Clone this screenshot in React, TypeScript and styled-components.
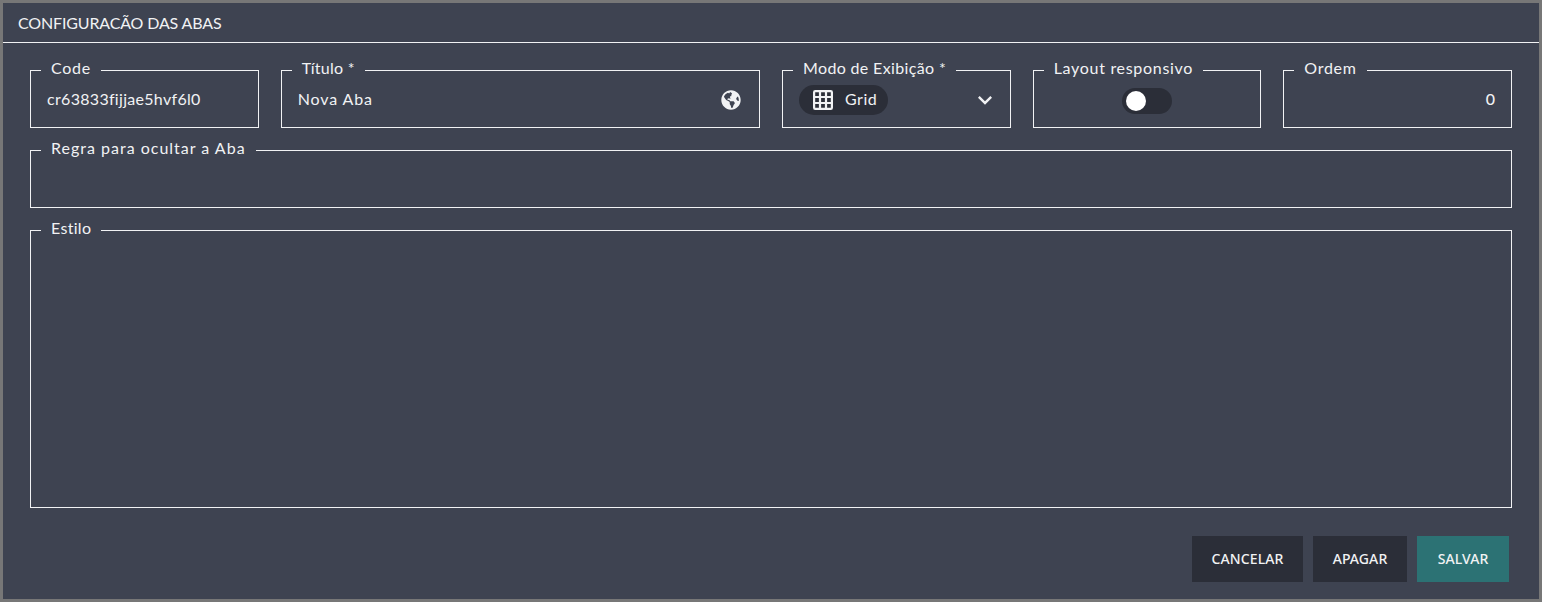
import styled, { createGlobalStyle } from "styled-components";
import { FaGlobeAmericas } from "react-icons/fa";
import { MdKeyboardArrowDown } from "react-icons/md";

const GlobalStyle = createGlobalStyle`
  html, body {
    margin: 0;
    padding: 0;
    background: #777777;
  }
  * {
    box-sizing: border-box;
  }
`

const GridIcon = () => (
  <svg width="20" height="20" viewBox="0 0 20 20" fill="none" stroke="#f1f2f4" strokeWidth="2.2" strokeLinejoin="round">
    <rect x="1.1" y="1.1" width="17.8" height="17.8" rx="1.2" />
    <path d="M7 1v18M13 1v18M1 7h18M1 13h18" />
  </svg>
)

const App = () => {
  return (
    <>
      <GlobalStyle />
      <Dialog>
        <Header>CONFIGURACÃO DAS ABAS</Header>
        <Form>
          <Field>
            <Label>Code</Label>
            <Value $spacing={0.3}>cr63833fijjae5hvf6l0</Value>
          </Field>
          <Field $span={2}>
            <Label $spacing={0.25}>Título *</Label>
            <Value $spacing={0.9}>Nova Aba</Value>
            <GlobeSlot><FaGlobeAmericas size={20} /></GlobeSlot>
          </Field>
          <Field>
            <Label $spacing={0.35}>Modo de Exibição *</Label>
            <Chip>
              <GridIcon />
              <span>Grid</span>
            </Chip>
            <ArrowSlot><MdKeyboardArrowDown size={28} /></ArrowSlot>
          </Field>
          <Field>
            <Label>Layout responsivo</Label>
            <Toggle>
              <Knob />
            </Toggle>
          </Field>
          <Field>
            <Label>Ordem</Label>
            <Number>0</Number>
          </Field>
          <Field $span={6}>
            <Label $spacing={1}>Regra para ocultar a Aba</Label>
          </Field>
          <Field $span={6} $height={290}>
            <Label $spacing={0.3}>Estilo</Label>
          </Field>
        </Form>
        <Footer>
          <Button $width={111}>CANCELAR</Button>
          <Button $width={94}>APAGAR</Button>
          <Button $width={92} $primary>SALVAR</Button>
        </Footer>
      </Dialog>
    </>
  )
};

export default App

const Dialog = styled.div`
  width: 1542px;
  height: 602px;
  border: 3px solid #777777;
  background: #3e4351;
  color: #f1f2f4;
  font-family: "Lato", "Open Sans", sans-serif;
  overflow: hidden;
`

const Header = styled.div`
  height: 40px;
  padding: 0 15px;
  display: flex;
  align-items: center;
  font-size: 16px;
  letter-spacing: -0.15px;
  border-bottom: 1px solid #f1f2f4;
`

const Form = styled.div`
  display: grid;
  grid-template-columns: repeat(6, 1fr);
  column-gap: 22px;
  row-gap: 10px;
  padding: 15px 27px 0 27px;
`

const Field = styled.fieldset<{ $span?: number; $height?: number }>`
  grid-column: span ${p => p.$span ?? 1};
  height: ${p => p.$height ?? 70}px;
  min-width: 0;
  margin: 0;
  padding: 0 16px 10px;
  border: 1px solid #f1f2f4;
  display: flex;
  align-items: center;
`

const Label = styled.legend<{ $spacing?: number }>`
  margin-left: -6px;
  padding: 0 10px 4px;
  font-size: 16px;
  line-height: 20px;
  letter-spacing: ${p => p.$spacing ?? 0.7}px;
  white-space: nowrap;
`

const Value = styled.div<{ $spacing: number }>`
  margin-top: -2px;
  font-size: 16px;
  letter-spacing: ${p => p.$spacing}px;
`

const GlobeSlot = styled.div`
  display: flex;
  margin-left: auto;
  margin-right: 2px;
`

const Chip = styled.div`
  height: 30px;
  padding: 0 11px 0 14px;
  display: flex;
  align-items: center;
  gap: 12px;
  border-radius: 15px;
  background: #2b2e38;
  font-size: 16px;
  letter-spacing: 0.5px;
  > span {
    margin-top: -2px;
  }
`

const ArrowSlot = styled.div`
  display: flex;
  margin-left: auto;
  margin-right: -5px;
`

const Toggle = styled.div`
  width: 50px;
  height: 26px;
  margin: 3px auto 0;
  padding: 0 4px;
  display: flex;
  align-items: center;
  border-radius: 13px;
  background: #2b2e38;
`

const Knob = styled.div`
  width: 20px;
  height: 20px;
  border-radius: 50%;
  background: #ffffff;
`

const Number = styled.div`
  width: 100%;
  margin-top: -2px;
  text-align: right;
  font-size: 16px;
  font-weight: 500;
`

const Footer = styled.div`
  display: flex;
  justify-content: flex-end;
  gap: 10px;
  padding: 28px 30px 0 0;
`

const Button = styled.button<{ $width: number; $primary?: boolean }>`
  width: ${p => p.$width}px;
  height: 46px;
  padding: 0 0 2px;
  border: none;
  background: ${p => (p.$primary ? "#2c7274" : "#2b2e38")};
  color: #f1f2f4;
  font-family: "Noto Sans", sans-serif;
  font-size: 14px;
  font-weight: 500;
  letter-spacing: 0.1px;
`
